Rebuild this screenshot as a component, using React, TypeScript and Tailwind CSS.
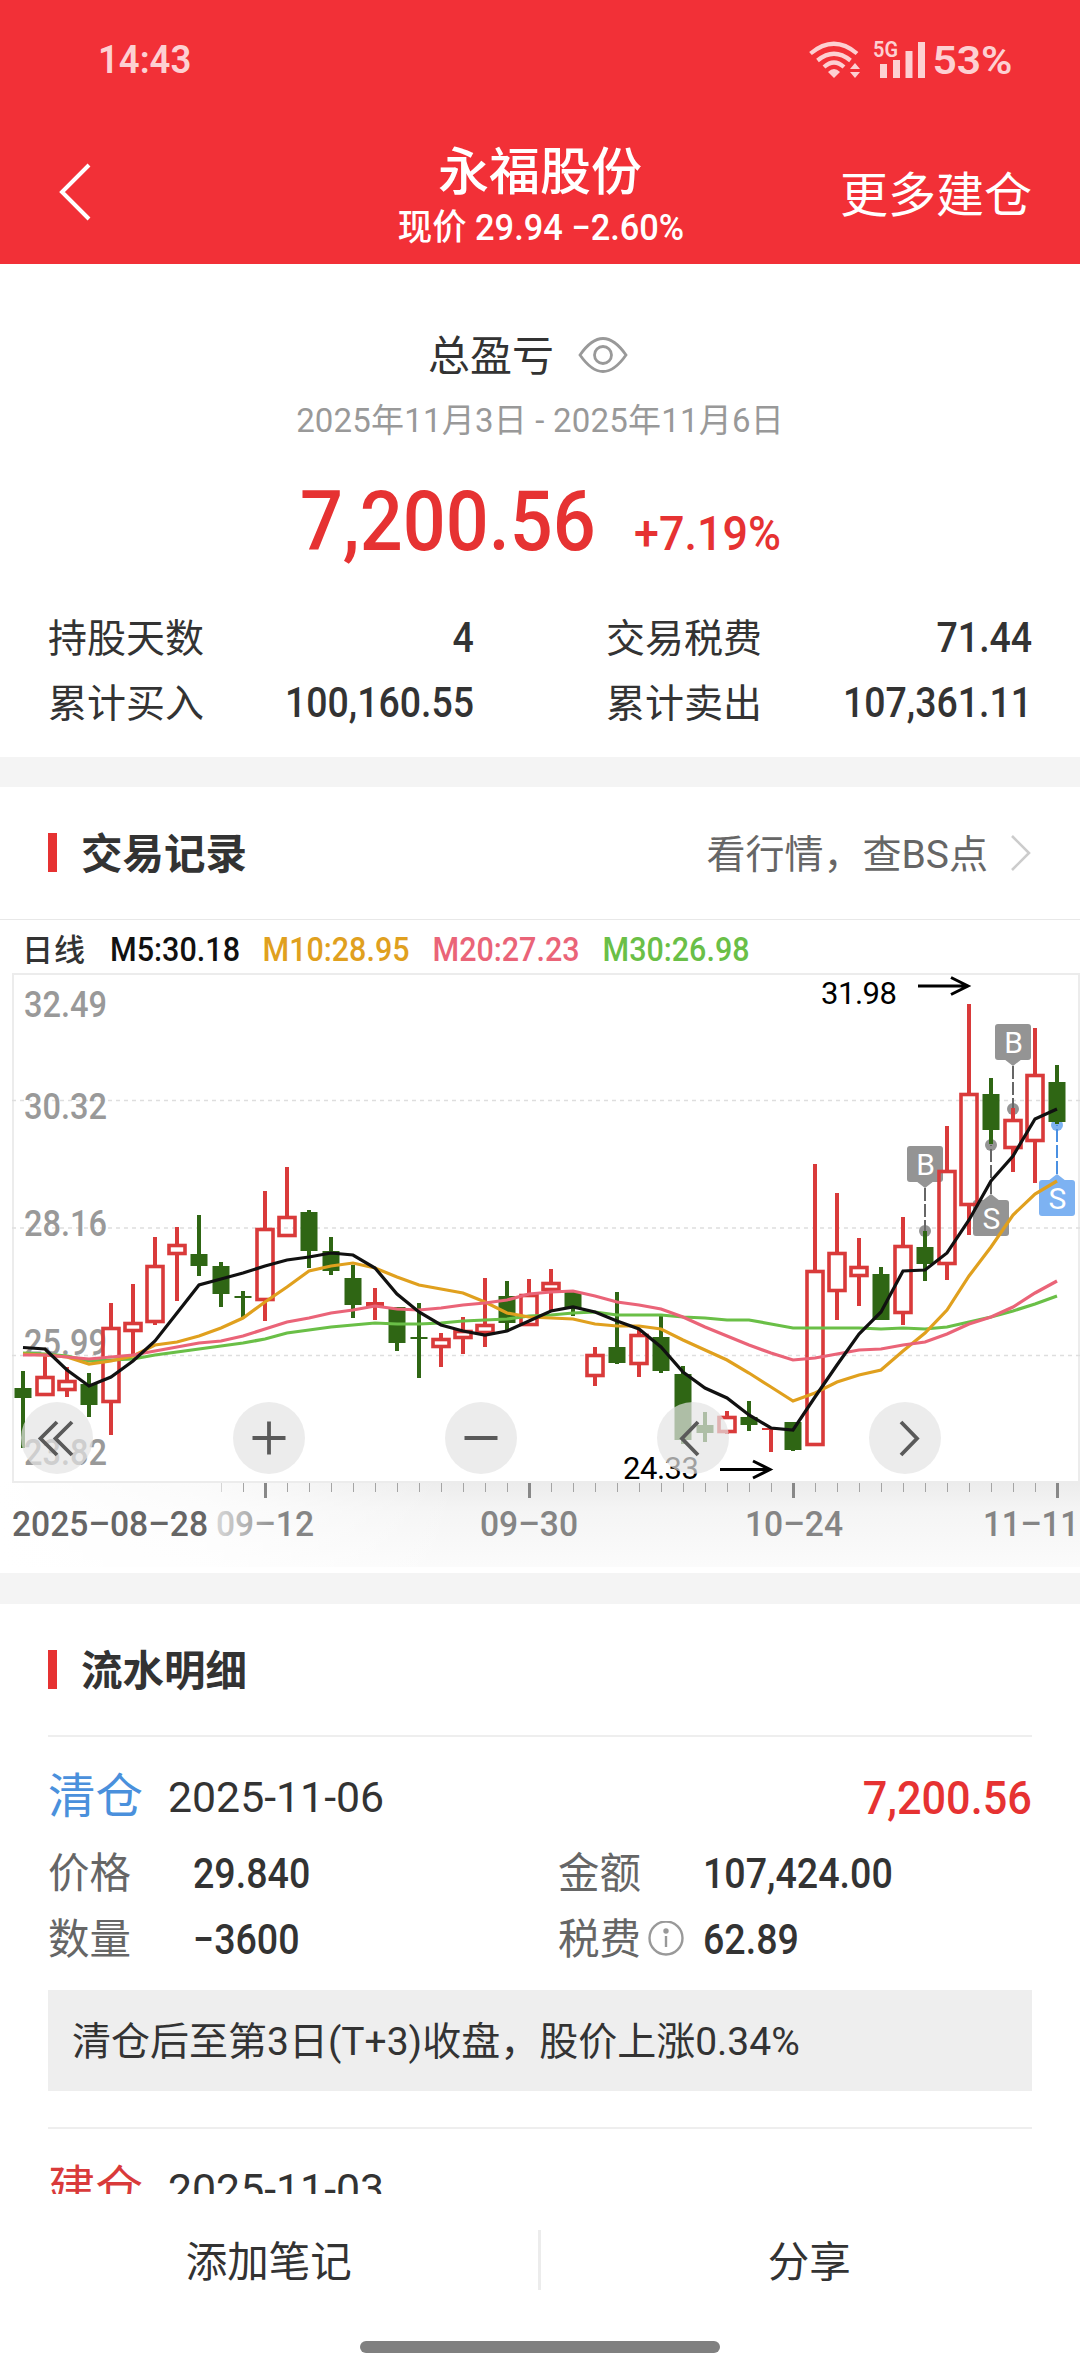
import React from 'react';

type Candle = {
  up: boolean;
  high: number;
  top: number;
  bottom: number;
  low: number;
};

const STEP = 22;
const FIRST_X = 23;
// The chart svg starts this far down the page, all values below are page based
const CHART_TOP = 920;

const xAt = (i: number) => FIRST_X + i * STEP;

const c = (up: number, high: number, top: number, bottom: number, low: number): Candle => ({
  up: up === 1,
  high,
  top,
  bottom,
  low,
});

const candles: Candle[] = [
  c(0, 1371, 1388, 1398, 1448),
  c(1, 1355, 1376, 1396, 1396),
  c(1, 1367, 1380, 1391, 1397),
  c(0, 1373, 1384, 1405, 1417),
  c(1, 1303, 1327, 1403, 1435),
  c(1, 1284, 1322, 1332, 1354),
  c(1, 1237, 1265, 1323, 1325),
  c(1, 1227, 1244, 1255, 1301),
  c(0, 1215, 1254, 1266, 1276),
  c(0, 1262, 1266, 1294, 1307),
  c(0, 1291, 1296, 1298, 1318),
  c(1, 1191, 1228, 1301, 1321),
  c(1, 1167, 1216, 1237, 1237),
  c(0, 1210, 1212, 1251, 1268),
  c(0, 1237, 1251, 1271, 1275),
  c(0, 1265, 1278, 1305, 1318),
  c(1, 1288, 1302, 1307, 1320),
  c(0, 1307, 1307, 1343, 1351),
  c(0, 1303, 1337, 1339, 1378),
  c(1, 1333, 1338, 1348, 1367),
  c(1, 1317, 1330, 1339, 1354),
  c(1, 1278, 1324, 1334, 1347),
  c(0, 1281, 1296, 1323, 1331),
  c(1, 1279, 1294, 1326, 1326),
  c(1, 1269, 1282, 1291, 1311),
  c(0, 1290, 1292, 1308, 1316),
  c(1, 1347, 1354, 1377, 1386),
  c(0, 1292, 1347, 1363, 1364),
  c(1, 1330, 1334, 1365, 1377),
  c(0, 1316, 1337, 1371, 1373),
  c(0, 1366, 1374, 1440, 1444),
  c(0, 1412, 1425, 1433, 1442),
  c(1, 1411, 1416, 1433, 1434),
  c(0, 1401, 1417, 1425, 1431),
  c(1, 1428, 1428, 1430, 1452),
  c(0, 1422, 1422, 1450, 1451),
  c(1, 1164, 1270, 1446, 1446),
  c(1, 1193, 1252, 1292, 1320),
  c(1, 1238, 1266, 1277, 1306),
  c(0, 1267, 1274, 1320, 1320),
  c(1, 1217, 1245, 1314, 1325),
  c(0, 1231, 1247, 1264, 1281),
  c(1, 1126, 1170, 1265, 1280),
  c(1, 1004, 1093, 1206, 1235),
  c(0, 1078, 1094, 1130, 1144),
  c(1, 1108, 1119, 1149, 1172),
  c(1, 1028, 1074, 1142, 1183),
  c(0, 1065, 1082, 1122, 1124),
];

const averages = [
  {
    color: '#6abf47',
    values: [
      1353, 1354, 1356, 1361, 1360, 1359, 1355, 1352, 1349, 1346, 1343, 1339, 1333, 1330, 1327, 1325,
      1323, 1324, 1324, 1323, 1321, 1320, 1319, 1316, 1315, 1313, 1312, 1315, 1315, 1315, 1317, 1318,
      1320, 1320, 1324, 1328, 1328, 1328, 1328, 1329, 1328, 1329, 1327, 1322, 1317, 1311, 1304, 1296,
    ],
  },
  {
    color: '#e0a01e',
    values: [
      1354, 1355, 1357, 1364, 1361, 1356, 1345, 1342, 1336, 1328, 1318, 1302, 1287, 1271, 1266, 1263,
      1268, 1277, 1285, 1289, 1293, 1302, 1313, 1317, 1318, 1319, 1324, 1326, 1326, 1329, 1340, 1350,
      1360, 1373, 1387, 1401, 1393, 1382, 1375, 1370, 1351, 1333, 1310, 1276, 1247, 1215, 1194, 1181,
    ],
  },
  {
    color: '#ea6478',
    values: [
      1355, 1355, 1357, 1359, 1357, 1355, 1351, 1347, 1343, 1341, 1336, 1329, 1322, 1318, 1313, 1310,
      1306, 1309, 1310, 1308, 1305, 1303, 1300, 1294, 1292, 1291, 1296, 1302, 1305, 1309, 1317, 1327,
      1336, 1345, 1353, 1360, 1358, 1354, 1350, 1349, 1345, 1342, 1334, 1324, 1317, 1307, 1293, 1281,
    ],
  },
  {
    color: '#111111',
    values: [
      1347.5, 1349, 1370, 1386, 1377, 1361, 1341, 1313, 1285, 1279, 1273, 1266, 1260, 1257, 1253, 1255,
      1268, 1294, 1312, 1325, 1331, 1335, 1331, 1321, 1311, 1307, 1312, 1321, 1329, 1347, 1372, 1388,
      1398, 1415, 1428, 1430, 1397, 1365, 1334, 1312, 1271, 1270, 1253, 1220, 1181, 1156, 1119, 1109,
    ],
  },
];

const legend = [
  { text: 'M5:30.18', x: 110, w: 130, color: '#111111' },
  { text: 'M10:28.95', x: 262.5, w: 147, color: '#e0a01e' },
  { text: 'M20:27.23', x: 432.5, w: 147, color: '#ea6478' },
  { text: 'M30:26.98', x: 602.5, w: 147, color: '#6abf47' },
];

const priceLabels = [
  { text: '32.49', y: 1016.5 },
  { text: '30.32', y: 1118.5 },
  { text: '28.16', y: 1236 },
  { text: '25.99', y: 1355 },
  { text: '23.82', y: 1465 },
];

const marks = [
  { text: 'B', x: 925, box: 1146, dot: 1231, fill: '#949494', line: '#666666' },
  { text: 'B', x: 1013, box: 1024, dot: 1109, fill: '#949494', line: '#666666' },
  { text: 'S', x: 991, box: 1200, dot: 1145, fill: '#949494', line: '#666666' },
  { text: 'S', x: 1057, box: 1180, dot: 1125, fill: '#7db2f2', line: '#4a90e2' },
];

const buttons = [
  { x: 57, d: 'M57 1422 L40.5 1438.5 L57 1455 M72 1422 L55.5 1438.5 L72 1455' },
  { x: 269, d: 'M252.500 1438 H285.500 M269 1421.500 V1454.500' },
  { x: 481, d: 'M464.500 1438 H497.500' },
  { x: 693, d: 'M698 1422 L682 1438.500 L698 1455' },
  { x: 905, d: 'M901 1422 L917 1438.500 L901 1455' },
];

const CandleShape = ({ x, candle }: { x: number; candle: Candle }) => {
  const { up, high, top, bottom, low } = candle;
  if (!up) {
    return (
      <g fill="#2f6614">
        <rect x={x - 2} y={high} width={4} height={low - high} />
        <rect x={x - 8.5} y={top} width={17} height={bottom - top} />
      </g>
    );
  }
  const h = bottom - top;
  return (
    <g fill="#d93a3a">
      <rect x={x - 2} y={high} width={4} height={Math.max(top - high, 0)} />
      <rect x={x - 2} y={bottom} width={4} height={Math.max(low - bottom, 0)} />
      {h < 7 ? (
        <rect x={x - 9} y={top} width={18} height={h} />
      ) : (
        <rect x={x - 8} y={top + 1.5} width={16} height={h - 3} fill="none" stroke="#d93a3a" strokeWidth={3.6} />
      )}
    </g>
  );
};

const Mark = ({ mark }: { mark: (typeof marks)[number] }) => {
  const { x, box, dot, fill, line, text } = mark;
  const above = box < dot;
  const tip = above ? box + 42 : box - 6;
  const edge = above ? box + 35 : box + 1;
  return (
    <g>
      <circle cx={x} cy={dot} r={6} fill={fill} />
      <line x1={x} x2={x} y1={tip} y2={dot} stroke={line} strokeWidth={2} strokeDasharray="13 3" />
      <path d={`M${x - 9} ${edge} L${x} ${tip} L${x + 9} ${edge} Z`} fill={fill} />
      <rect x={x - 18} y={box} width={36} height={36} rx={3} fill={fill} />
      <text x={x + 0.5} y={box + 29} fontSize={30} fill="#ffffff" textAnchor="middle">
        {text}
      </text>
    </g>
  );
};

const KLineChart = () => (
  <svg
    className="block h-[653px] w-[1080px] font-[Roboto,'Noto_Sans_CJK_SC',sans-serif]"
    viewBox={`0 ${CHART_TOP} 1080 653`}
  >
    <defs>
      <linearGradient id="axisShade" x1="0" y1="0" x2="0" y2="1">
        <stop offset="0" stopColor="#ececec" />
        <stop offset="0.35" stopColor="#f5f5f5" />
        <stop offset="1" stopColor="#fbfbfb" />
      </linearGradient>
      <linearGradient id="axisFade" x1="0" y1="0" x2="1" y2="0">
        <stop offset="0" stopColor="#ffffff" />
        <stop offset="0.45" stopColor="#ffffff" stopOpacity="0.75" />
        <stop offset="1" stopColor="#ffffff" stopOpacity="0" />
      </linearGradient>
      <linearGradient id="labelFade" gradientUnits="userSpaceOnUse" x1="212" y1="0" x2="285" y2="0">
        <stop offset="0" stopColor="#dcdcdc" />
        <stop offset="1" stopColor="#858585" />
      </linearGradient>
    </defs>

    {/* moving average legend */}
    <text x={22} y={960.5} fontSize={31} fontWeight={500} fill="#333333" textLength={63}>
      日线
    </text>
    {legend.map((item) => (
      <text
        key={item.text}
        x={item.x}
        y={961}
        fontSize={33}
        fontWeight={500}
        fill={item.color}
        textLength={item.w}
        lengthAdjust="spacingAndGlyphs"
      >
        {item.text}
      </text>
    ))}

    {/* date axis */}
    <rect x={0} y={1482} width={1080} height={85} fill="url(#axisShade)" />
    <rect x={0} y={1482} width={460} height={86} fill="url(#axisFade)" />

    {/* frame and grid */}
    <rect x={13} y={974} width={1066} height={508} fill="#ffffff" stroke="#ececec" strokeWidth={2} />
    {[1100.5, 1228, 1355.5].map((y) => (
      <line key={y} x1={12} x2={1080} y1={y} y2={y} stroke="#dedede" strokeWidth={1.4} strokeDasharray="4 4" />
    ))}
    {priceLabels.map((label) => (
      <text
        key={label.text}
        x={24}
        y={label.y}
        fontSize={36.5}
        fontWeight={500}
        fill="#999999"
        textLength={83}
        lengthAdjust="spacingAndGlyphs"
      >
        {label.text}
      </text>
    ))}

    {marks.map((mark) => (
      <Mark key={mark.x} mark={mark} />
    ))}
    {candles.map((candle, i) => (
      <CandleShape key={i} x={xAt(i)} candle={candle} />
    ))}
    {averages.map((line) => (
      <polyline
        key={line.color}
        points={line.values.map((y, i) => `${xAt(i)},${y}`).join(' ')}
        fill="none"
        stroke={line.color}
        strokeWidth={3.2}
      />
    ))}

    {/* highest and lowest price */}
    <g fontSize={31} fill="#000000">
      <text x={821} y={1004} textLength={76}>
        31.98
      </text>
      <text x={623} y={1479} textLength={76}>
        24.33
      </text>
    </g>
    <path
      d="M918 986 H968 M951 977.500 L968 986 L951 994.500 M720 1469.500 H770 M753 1461 L770 1469.500 L753 1478"
      fill="none"
      stroke="#000000"
      strokeWidth={3}
    />

    {buttons.map((button) => (
      <g key={button.x}>
        <circle cx={button.x} cy={1438} r={36} fill="#e4e4e4" fillOpacity={0.7} />
        <path d={button.d} fill="none" stroke="#5a5a5a" strokeWidth={3.8} />
      </g>
    ))}

    {candles.map((_, i) => {
      if (i < 9) return null;
      const major = (i - 11) % 12 === 0;
      return (
        <rect
          key={i}
          x={xAt(i) - (major ? 1 : 0)}
          y={1483}
          width={major ? 3 : 1}
          height={major ? 15 : 9}
          fill={i === 9 ? '#d5d5d5' : major ? '#888888' : '#a5a5a5'}
        />
      );
    })}
    <g fontSize={35.5} fontWeight={500} fill="#858585">
      <text x={12} y={1536} textLength={196} lengthAdjust="spacingAndGlyphs" fill="#666666">
        2025–08–28
      </text>
      <text x={216} y={1536} textLength={98} lengthAdjust="spacingAndGlyphs" fill="url(#labelFade)">
        09–12
      </text>
      <text x={480} y={1536} textLength={98} lengthAdjust="spacingAndGlyphs">
        09–30
      </text>
      <text x={745} y={1536} textLength={98} lengthAdjust="spacingAndGlyphs">
        10–24
      </text>
      <text x={983} y={1536} textLength={96} lengthAdjust="spacingAndGlyphs">
        11–11
      </text>
    </g>
  </svg>
);

const StatusBar = () => (
  <div className="flex h-[120px] items-center justify-between pr-[68px] pl-[98px] text-[38px] font-semibold text-[#fdd0d2]">
    <span className="origin-left scale-x-[0.96] leading-none">14:43</span>
    <div className="flex items-center">
      <svg className="h-[48px] w-[120px]" viewBox="808 36 120 48" fill="none" stroke="#fdd0d2">
        <path d="M810.500 53.500 Q834 34 857 53.500" strokeWidth="4.200" />
        <path d="M817.500 60.500 Q834 47 850.500 60.500" strokeWidth="4.200" />
        <path d="M824 67 Q834 58 844 67" strokeWidth="4.200" />
        <path d="M828 72 L834 78 L840 72 Q834 66 828 72Z" fill="#fdd0d2" stroke="none" />
        <path d="M850 69 L855 63 L860 69Z M850 72 L855 78 L860 72Z" fill="#fdd0d2" stroke="none" />
        <path d="M883.500 64 V78 M896.500 60 V78 M909 51 V78 M921.500 42 V78" strokeWidth="7" />
        <text
          x="873"
          y="57"
          fontSize="22"
          fontWeight="600"
          fill="#fdd0d2"
          stroke="none"
          textLength="25"
          lengthAdjust="spacingAndGlyphs"
        >
          5G
        </text>
      </svg>
      <span className="ml-[13px] origin-right scale-x-[1.12] pt-[2px] leading-none">53%</span>
    </div>
  </div>
);

const Header = () => (
  <header className="h-[264px] bg-[#f23037] text-white">
    <StatusBar />
    <div className="grid h-[144px] grid-cols-[1fr_400px_1fr]">
      <div className="flex items-center pl-[58px]">
        <svg className="h-[58px] w-[36px]" viewBox="0 0 36 58" fill="none" stroke="white" strokeWidth="4">
          <path d="M31 2 L4 29 L31 56" />
        </svg>
      </div>
      <div className="flex flex-col items-center">
        <h1 className="mt-[25px] text-[51px] leading-[56px] font-medium">永福股份</h1>
        <p className="mt-[7px] ml-px scale-x-[0.955] text-[36px] leading-[40px] font-medium whitespace-nowrap">
          现价 29.94 −2.60%
        </p>
      </div>
      <div className="flex items-center justify-end pt-[7px] pr-[48px] text-[48px] leading-none">更多建仓</div>
    </div>
  </header>
);

const Summary = () => {
  const stats = [
    ['持股天数', '4'],
    ['交易税费', '71.44'],
    ['累计买入', '100,160.55'],
    ['累计卖出', '107,361.11'],
  ];
  return (
    <section className="h-[493px] px-12 pt-[66px]">
      <div className="flex h-[50px] items-center justify-center gap-[24px] pr-[24px]">
        <span className="pt-[3px] text-[42px] leading-none">总盈亏</span>
        <svg className="h-[38px] w-[50px]" viewBox="0 0 50 38" fill="none" stroke="#999999" strokeWidth="2.800">
          <path d="M2 19 Q25 -14 48 19 Q25 52 2 19Z" />
          <circle cx="25" cy="19" r="8.500" />
        </svg>
      </div>
      <div className="mt-[16px] text-center text-[33px] leading-[50px] tracking-[0.2px] text-[#999999]">
        2025年11月3日 - 2025年11月6日
      </div>
      <div className="-mt-px flex items-baseline justify-center pr-[18px] font-medium text-[#e63232]">
        <span className="mt-[27px] origin-right scale-x-[0.911] text-[83px] leading-[100px]">7,200.56</span>
        <span className="ml-[38px] origin-left scale-x-[0.935] text-[48px] leading-none">+7.19%</span>
      </div>
      <div className="mt-[33px] grid grid-cols-2 gap-x-[132px]">
        {stats.map(([label, value]) => (
          <div key={label} className="flex h-[65px] items-center justify-between leading-none">
            <span className="pt-[3px] text-[39px]">{label}</span>
            <span className="origin-right scale-x-[0.892] text-[42px] font-medium">{value}</span>
          </div>
        ))}
      </div>
    </section>
  );
};

const SectionTitle = ({ title, children }: { title: string; children?: React.ReactNode }) => (
  <div className="flex h-[131px] items-center px-12 leading-none">
    <span className="h-[39px] w-[9px] bg-[#e63232]" />
    <h2 className="ml-[24px] pt-[5px] text-[41.5px] font-bold">{title}</h2>
    <div className="ml-auto">{children}</div>
  </div>
);

const RecordTitle = ({ kind, date, profit, color }: { kind: string; date: string; profit?: string; color: string }) => (
  <div className="flex h-[126px] items-center border-t-2 border-[#eeeeee] pb-[3px] leading-none">
    <span className={`text-[47.5px] ${color}`}>{kind}</span>
    <span className="ml-[25px] text-[42.8px]">{date}</span>
    <span className="ml-auto origin-right scale-x-[0.92] text-[47px] font-medium text-[#e63232]">{profit}</span>
  </div>
);

const Field = ({ label, value, info }: { label: string; value: string; info?: boolean }) => (
  <div className="flex h-[66px] items-center leading-none">
    <span className="text-[41.5px] text-[#666666]">{label}</span>
    <span className="flex w-[62px] pl-[7px]">
      {info && (
        <svg className="h-[38px] w-[38px]" viewBox="0 0 38 38" fill="none" stroke="#999999" strokeWidth="2.400">
          <circle cx="18" cy="17" r="16.500" />
          <path d="M18 15 V26" />
          <circle cx="18" cy="10" r="1.500" fill="#999999" />
        </svg>
      )}
    </span>
    <span className="origin-left scale-x-[0.895] text-[42px] font-medium">{value}</span>
  </div>
);

const App = () => {
  return (
    <div className="flex h-[2374px] w-[1080px] flex-col overflow-hidden bg-white font-[Roboto,'Noto_Sans_CJK_SC',sans-serif] text-[#333333]">
      <Header />
      <main className="h-[1930px] shrink-0 overflow-hidden">
        <Summary />
        <div className="h-[30px] bg-[#f4f4f4]" />
        <SectionTitle title="交易记录">
          <div className="flex items-center text-[39px] text-[#666666]">
            <span className="pt-[6px]">看行情，查BS点</span>
            <svg className="ml-[22px] h-[38px] w-[22px]" viewBox="0 0 22 38" fill="none" stroke="#cccccc" strokeWidth="2.600">
              <path d="M2 2 L19 19 L2 36" />
            </svg>
          </div>
        </SectionTitle>
        <div className="mt-px h-px bg-[#e8e8e8]" />
        <KLineChart />
        <div className="h-[31px] bg-[#f4f4f4]" />
        <SectionTitle title="流水明细" />
        <div className="px-12">
          <RecordTitle kind="清仓" date="2025-11-06" profit="7,200.56" color="text-[#4a90dc]" />
          <div className="-mt-[20px] grid grid-cols-[510px_1fr]">
            <Field label="价格" value="29.840" />
            <Field label="金额" value="107,424.00" />
            <Field label="数量" value="−3600" />
            <Field label="税费" value="62.89" info />
          </div>
          <div className="mt-[17px] mb-[36px] flex h-[101px] items-center bg-[#eeeeee] pt-[4px] pl-[24px] text-[39px] leading-none">
            清仓后至第3日(T+3)收盘，股价上涨0.34%
          </div>
          <RecordTitle kind="建仓" date="2025-11-03" color="text-[#d93a3a]" />
        </div>
      </main>
      <footer className="flex flex-1 flex-col items-center">
        <div className="mt-[36px] flex h-[60px] w-full items-center pr-[2px] text-[41.5px] leading-none">
          <span className="flex-1 pt-[5px] text-center">添加笔记</span>
          <span className="h-full w-[3px] bg-[#ececec]" />
          <span className="flex-1 pt-[5px] text-center">分享</span>
        </div>
        <div className="mt-[51px] h-[12px] w-[360px] rounded-full bg-[#808080]" />
      </footer>
    </div>
  );
};

export default App;
